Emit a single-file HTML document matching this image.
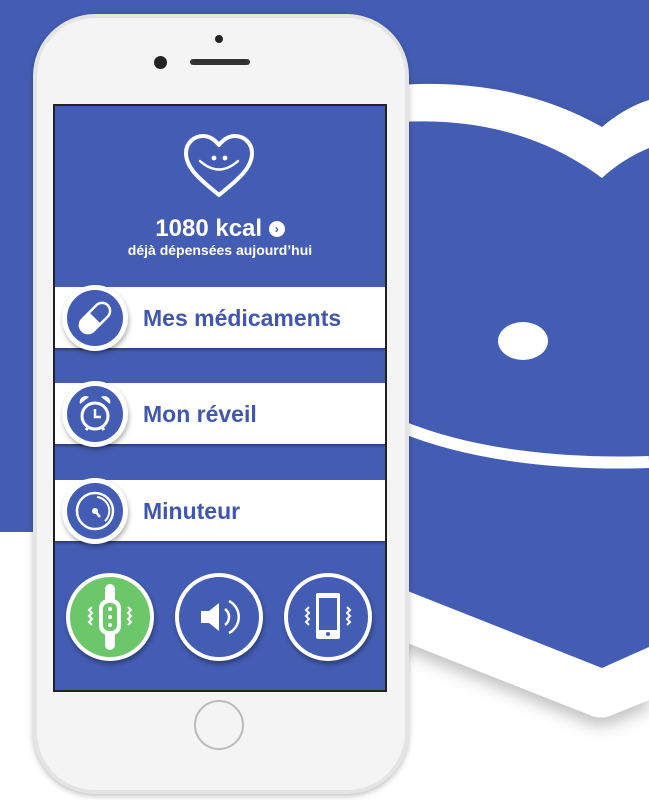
<!DOCTYPE html>
<html><head><meta charset="utf-8"><style>
*{margin:0;padding:0;box-sizing:border-box}
body{width:649px;height:800px;overflow:hidden;background:#fff;position:relative;font-family:"Liberation Sans",sans-serif}
.abs{position:absolute}
.row{position:absolute;left:55px;width:330px;height:61px;background:#fff;box-shadow:0 2px 2px rgba(0,0,0,.35)}
.row span{position:absolute;left:88px;top:18px;font-size:23px;font-weight:bold;color:#3f57ae}
.ic{position:absolute;width:66px;height:66px;border-radius:50%;background:#fff;box-shadow:1px 3px 5px rgba(0,0,0,.3)}
.ic svg{position:absolute;left:5px;top:5px}
.bc{position:absolute;width:88px;height:88px;border-radius:50%;border:4px solid #fff;background:#445db4;box-shadow:1px 3px 5px rgba(0,0,0,.35)}
</style></head><body>
<svg class="abs" style="left:0;top:0" width="649" height="800">
<defs><filter id="sh" x="-20%" y="-20%" width="140%" height="140%"><feDropShadow dx="0" dy="8" stdDeviation="8" flood-opacity="0.25"/></filter></defs>
<rect x="0" y="0" width="649" height="532" fill="#445db4"/>
<path d="M602 127 C540 92 470 80 400 85 L400 640 L590 715 Q600 720 612 715 L649 700 L649 100 C630 106 615 116 602 127 Z" fill="#fff" filter="url(#sh)"/>
<path d="M602 178 C540 132 470 118 400 122 L400 588 L602 668 L649 647 L649 148 C630 156 615 166 602 178 Z" fill="#445db4"/>
<ellipse cx="523" cy="341" rx="25" ry="19" fill="#fff"/>
<path d="M400 426 C470 455 560 465 649 462" stroke="#fff" stroke-width="12" fill="none"/>
</svg>
<div class="abs" style="left:33px;top:14px;width:376px;height:780px;border-radius:62px;background:#e4e4e4;box-shadow:0 2px 6px rgba(0,0,0,.25)"></div>
<div class="abs" style="left:37px;top:18px;width:368px;height:772px;border-radius:58px;background:#f4f4f4"></div>
<div class="abs" style="left:215px;top:35px;width:8px;height:8px;border-radius:50%;background:#222"></div>
<div class="abs" style="left:154px;top:56px;width:13px;height:13px;border-radius:50%;background:#222"></div>
<div class="abs" style="left:190px;top:59px;width:60px;height:6px;border-radius:3px;background:#333"></div>
<div class="abs" style="left:194px;top:700px;width:50px;height:50px;border-radius:50%;border:2px solid #bbb;background:#f4f4f4"></div>
<div class="abs" style="left:53px;top:104px;width:334px;height:588px;background:#445db4;border:2px solid #222"></div>
<svg class="abs" style="left:182px;top:133px" width="74" height="66" viewBox="0 0 74 66">
<path d="M37 62 C20 48 4 36 4 20 C4 10 12 3 21 3 C28 3 33 7 37 12 C41 7 46 3 53 3 C62 3 70 10 70 20 C70 36 54 48 37 62 Z" fill="none" stroke="#fff" stroke-width="4" stroke-linejoin="round"/>
<circle cx="32" cy="25" r="2.4" fill="#fff"/><circle cx="43" cy="25" r="2.4" fill="#fff"/>
<path d="M18 28 Q37 45 56 28" stroke="#fff" stroke-width="2.4" fill="none" stroke-linecap="round"/>
</svg>
<div class="abs" style="left:55px;width:330px;top:215px;text-align:center;color:#fff;font-weight:bold;font-size:24px;line-height:28px">1080 kcal <span style="display:inline-block;width:16px;height:16px;border-radius:50%;background:#fff;color:#445db4;font-size:12px;line-height:16px;vertical-align:3px">›</span></div>
<div class="abs" style="left:55px;width:330px;top:242px;text-align:center;color:#fff;font-weight:bold;font-size:14px">déjà dépensées aujourd’hui</div>
<div class="row" style="top:287px"><span>Mes médicaments</span></div>
<div class="row" style="top:383px"><span>Mon réveil</span></div>
<div class="row" style="top:480px"><span>Minuteur</span></div>
<div class="ic" style="left:62px;top:285px"><svg width="56" height="56" viewBox="0 0 56 56"><circle cx="28" cy="28" r="28" fill="#445db4"/>
<g transform="rotate(-45 28 28)"><rect x="10" y="20" width="36" height="16" rx="8" fill="none" stroke="#fff" stroke-width="2.5"/><path d="M10 28 a8 8 0 0 0 8 8 H28 V20 H18 a8 8 0 0 0 -8 8Z" fill="#fff"/></g></svg></div>
<div class="ic" style="left:62px;top:381px"><svg width="56" height="56" viewBox="0 0 56 56"><circle cx="28" cy="28" r="28" fill="#445db4"/>
<circle cx="28" cy="30" r="13" fill="none" stroke="#fff" stroke-width="3"/><path d="M28 23 V31 H34" stroke="#fff" stroke-width="2.5" fill="none"/>
<path d="M13 18 a6 6 0 0 1 9-7Z M43 18 a6 6 0 0 0 -9-7Z" fill="#fff"/><path d="M19 44 l3-4 M37 44 l-3-4" stroke="#fff" stroke-width="3"/></svg></div>
<div class="ic" style="left:62px;top:478px"><svg width="56" height="56" viewBox="0 0 56 56"><circle cx="28" cy="28" r="28" fill="#445db4"/>
<circle cx="28" cy="28" r="18" fill="none" stroke="#fff" stroke-width="2.5"/><path d="M30 14 A14 14 0 0 1 38 38" stroke="#fff" stroke-width="2" fill="none"/>
<circle cx="28" cy="28" r="3" fill="#fff"/><path d="M28 28 L33 34" stroke="#fff" stroke-width="2.5"/></svg></div>
<div class="bc" style="left:66px;top:573px;background:#6cc76a"><svg width="80" height="80" viewBox="0 0 80 80"><rect x="35" y="7" width="10" height="66" rx="5" fill="#fff"/><rect x="29" y="22" width="22" height="36" rx="9" fill="#fff"/><rect x="33" y="26" width="14" height="28" rx="6" fill="#6cc76a"/><circle cx="40" cy="32" r="2" fill="#fff"/><circle cx="40" cy="40" r="2" fill="#fff"/><circle cx="40" cy="48" r="2" fill="#fff"/><path d="M22 30 l-3 3 3 3 -3 3 3 3 -3 3 3 3 M58 30 l3 3 -3 3 3 3 -3 3 3 3 -3 3" stroke="#fff" stroke-width="2" fill="none"/></svg></div>
<div class="bc" style="left:175px;top:573px"><svg width="80" height="80" viewBox="0 0 80 80"><path d="M22 34 H30 L40 26 V54 L30 46 H22Z" fill="#fff"/><path d="M46 32 a10 10 0 0 1 0 16 M50 24 a18 18 0 0 1 0 32" stroke="#fff" stroke-width="2.5" fill="none"/></svg></div>
<div class="bc" style="left:284px;top:573px"><svg width="80" height="80" viewBox="0 0 80 80"><rect x="28" y="16" width="24" height="46" rx="2" fill="#fff"/><rect x="31" y="21" width="18" height="32" fill="#445db4"/><circle cx="40" cy="57" r="2" fill="#445db4"/><path d="M21 30 l-3 3 3 3 -3 3 3 3 -3 3 3 3 M59 30 l3 3 -3 3 3 3 -3 3 3 3 -3 3" stroke="#fff" stroke-width="2" fill="none"/></svg></div>
</body></html>
